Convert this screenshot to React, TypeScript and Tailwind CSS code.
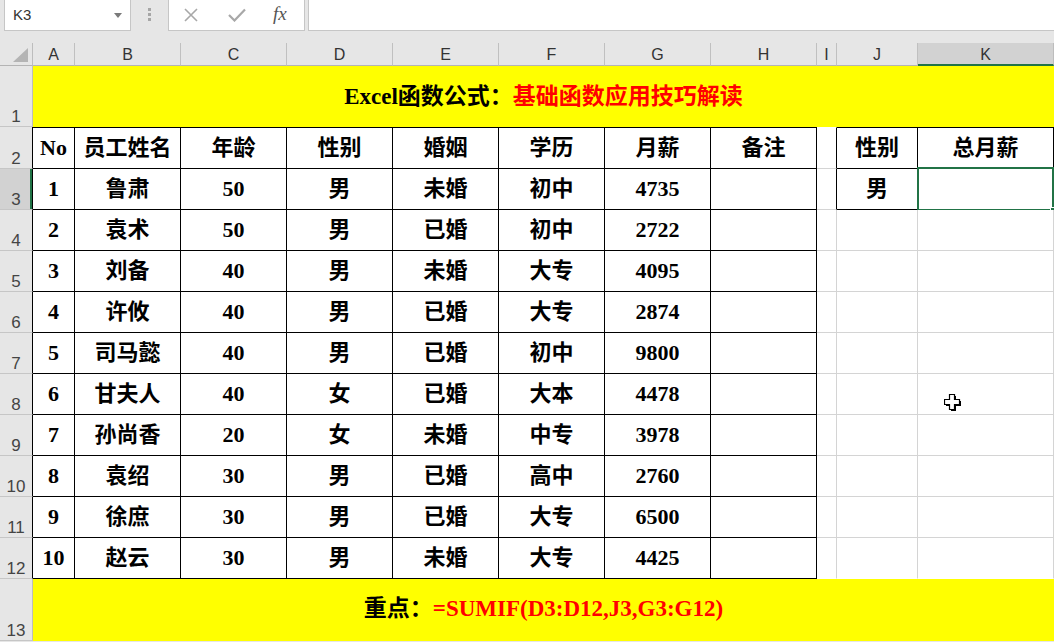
import React from 'react';

const COLS = ['A', 'B', 'C', 'D', 'E', 'F', 'G', 'H', 'I', 'J', 'K'];

const HEAD = ['No', '员工姓名', '年龄', '性别', '婚姻', '学历', '月薪', '备注'];
const DATA = [
  ['1', '鲁肃', '50', '男', '未婚', '初中', '4735', ''],
  ['2', '袁术', '50', '男', '已婚', '初中', '2722', ''],
  ['3', '刘备', '40', '男', '未婚', '大专', '4095', ''],
  ['4', '许攸', '40', '男', '已婚', '大专', '2874', ''],
  ['5', '司马懿', '40', '男', '已婚', '初中', '9800', ''],
  ['6', '甘夫人', '40', '女', '已婚', '大本', '4478', ''],
  ['7', '孙尚香', '20', '女', '未婚', '中专', '3978', ''],
  ['8', '袁绍', '30', '男', '已婚', '高中', '2760', ''],
  ['9', '徐庶', '30', '男', '已婚', '大专', '6500', ''],
  ['10', '赵云', '30', '男', '未婚', '大专', '4425', ''],
];

function inTable(r: number, c: number) {
  if (r >= 2 && r <= 12 && c >= 0 && c <= 7) return true;
  if ((r === 2 || r === 3) && (c === 9 || c === 10)) return true;
  return false;
}

function content(r: number, c: number): string {
  if (c <= 7) return r === 2 ? HEAD[c] : DATA[r - 3][c];
  if (c === 9) return r === 2 ? '性别' : r === 3 ? '男' : '';
  if (c === 10) return r === 2 ? '总月薪' : '';
  return '';
}

function RowHeader({ n, border, selected }: { n: number; border: 'black' | 'gray'; selected?: boolean }) {
  return (
    <div
      className={
        'flex items-end justify-center pb-[1px] border-r border-b border-b-[#c6c6c6] text-[17px] leading-none text-[#444] font-["Liberation_Sans",sans-serif] ' +
        (border === 'black' ? 'border-r-black ' : 'border-r-[#bdbdbd] ') +
        (selected ? 'bg-[#d2d2d2] shadow-[inset_-2px_0_0_#217346]' : 'bg-[#e6e6e6]')
      }
    >
      {n}
    </div>
  );
}

function Cursor() {
  return (
    <svg className="absolute left-[944px] top-[394px]" width="19" height="19" viewBox="0 0 19 19">
      <polygon
        points="7,2 12,2 12,7 17,7 17,12 12,12 12,17 7,17 7,12 2,12 2,7 7,7"
        fill="#000"
      />
      <polygon
        points="5.5,0.5 10.5,0.5 10.5,5.5 15.5,5.5 15.5,10.5 10.5,10.5 10.5,15.5 5.5,15.5 5.5,10.5 0.5,10.5 0.5,5.5 5.5,5.5"
        fill="#fff"
        stroke="#000"
        strokeWidth="1.2"
      />
    </svg>
  );
}

export default function App() {
  const serif = "font-['Liberation_Serif','Noto_Sans_CJK_SC',serif]";
  const rows = [];
  for (let r = 2; r <= 12; r++) {
    rows.push(
      <RowHeader key={'h' + r} n={r} border="black" selected={r === 3} />
    );
    for (let c = 0; c < 11; c++) {
      const t = inTable(r, c);
      const rightBlack = t || inTable(r, c + 1);
      const bottomBlack = t || inTable(r + 1, c);
      const cls =
        'relative flex items-center justify-center bg-white border-r border-b text-[22px] leading-none font-bold text-black ' +
        serif +
        ' ' +
        (rightBlack ? 'border-r-black ' : 'border-r-[#d4d4d4] ') +
        (bottomBlack ? 'border-b-black ' : r === 12 ? 'border-b-transparent ' : 'border-b-[#d4d4d4] ') +
        (r === 2 ? (t ? 'border-t border-t-black' : 'border-t border-t-transparent') : '');
      rows.push(
        <div key={r + '-' + c} className={cls}>
          {content(r, c)}
          {r === 3 && c === 10 && (
            <>
              <div className="absolute left-[-1px] top-[-2px] right-[-1px] bottom-[-2px] border-2 border-[#217346]" />
              <div className="absolute right-[-3px] bottom-[-4px] w-[6px] h-[6px] bg-[#217346] border border-white" />
            </>
          )}
        </div>
      );
    }
  }

  return (
    <div className="relative w-[1054px] h-[642px] overflow-hidden bg-[#e6e6e6]">
      {/* formula bar */}
      <div className="h-[43px] bg-[#e6e6e6]">
        <div className="flex h-[31px]">
          <div className="ml-[4px] w-[127px] h-[31px] bg-white border border-t-0 border-[#c6c6c6] flex items-center justify-between pl-[8px] pr-[8px]">
            <span className="text-[15px] text-[#333] font-['Liberation_Sans',sans-serif]">K3</span>
            <svg width="8" height="5" viewBox="0 0 8 5">
              <polygon points="0,0 8,0 4,5" fill="#7a7a7a" />
            </svg>
          </div>
          <div className="w-[37px] flex flex-col items-center pt-[8px] gap-[2px]">
            <div className="w-[3px] h-[3px] bg-[#a6a6a6]" />
            <div className="w-[3px] h-[3px] bg-[#a6a6a6]" />
            <div className="w-[3px] h-[3px] bg-[#a6a6a6]" />
          </div>
          <div className="w-[137px] h-[31px] bg-white border border-t-0 border-[#c6c6c6] flex items-center">
            <svg className="ml-[15px]" width="14" height="14" viewBox="0 0 14 14">
              <path d="M1 1 L13 13 M13 1 L1 13" stroke="#a8a8a8" strokeWidth="1.6" fill="none" />
            </svg>
            <svg className="ml-[30px]" width="18" height="14" viewBox="0 0 18 14">
              <path d="M1 7 L6.5 12.5 L17 1.5" stroke="#a8a8a8" strokeWidth="2.2" fill="none" />
            </svg>
            <span className="ml-[27px] mt-[-2px] text-[19px] italic text-[#555] font-['Liberation_Serif',serif]">fx</span>
          </div>
          <div className="ml-[3px] flex-1 h-[31px] bg-white border-l border-b border-[#c6c6c6]" />
        </div>
      </div>

      {/* sheet */}
      <div className="grid grid-cols-[33px_42px_106px_106px_106px_106px_106px_106px_106px_20px_81px_136px] grid-rows-[23px_61px_42px_41px_41px_41px_41px_41px_41px_41px_41px_41px_41px_62px]">
        {/* column header row */}
        <div className="relative bg-[#e6e6e6] border-r border-b border-r-[#bdbdbd] border-b-[#b4b4b4]">
          <svg className="absolute left-[13px] top-[5px]" width="15" height="14" viewBox="0 0 15 14">
            <polygon points="15,0 15,14 0,14" fill="#b4b4b4" />
          </svg>
        </div>
        {COLS.map((c) => (
          <div
            key={c}
            className={
              'flex items-center justify-center pt-[2px] border-r text-[16px] leading-none text-[#333] font-["Liberation_Sans",sans-serif] ' +
              (c === 'K'
                ? 'bg-[#d2d2d2] border-r-[#bdbdbd] border-b-2 border-b-[#217346]'
                : 'bg-[#e6e6e6] border-r-[#c0c0c0] border-b border-b-[#b4b4b4]')
            }
          >
            {c}
          </div>
        ))}

        {/* row 1 */}
        <RowHeader n={1} border="gray" />
        <div className={'col-span-11 flex items-center justify-center bg-[#ffff00] text-[23px] leading-none font-bold ' + serif}>
          <span className="text-black">Excel函数公式：</span>
          <span className="text-[#ff0000]">基础函数应用技巧解读</span>
        </div>

        {rows}

        {/* row 13 */}
        <RowHeader n={13} border="gray" />
        <div className={'col-span-11 flex items-center justify-center pb-[3px] bg-[#ffff00] text-[23px] leading-none font-bold ' + serif}>
          <span className="text-black">重点：</span>
          <span className="text-[#ff0000]">=SUMIF(D3:D12,J3,G3:G12)</span>
        </div>
      </div>

      <Cursor />
    </div>
  );
}
